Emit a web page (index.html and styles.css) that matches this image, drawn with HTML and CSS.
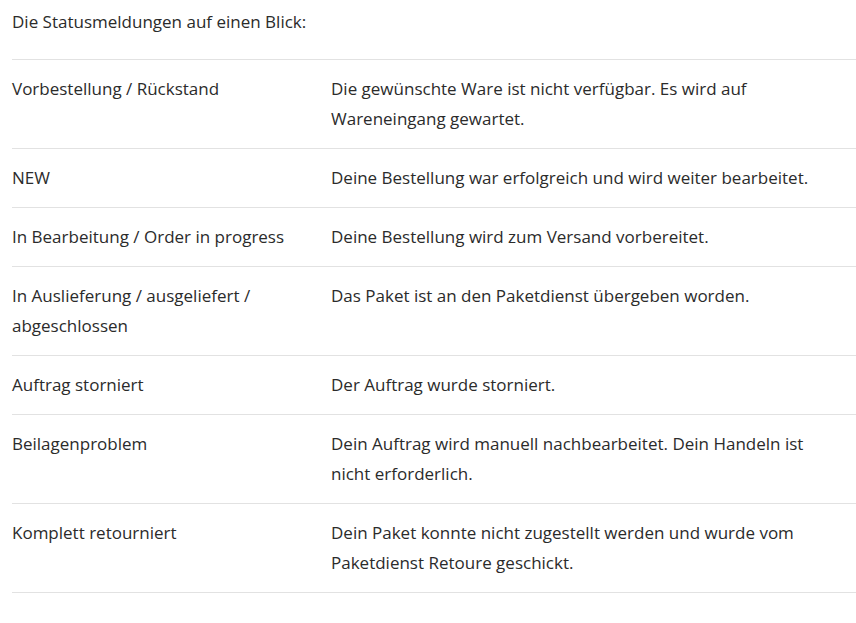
FILE: index.html
```html
<!DOCTYPE html>
<html lang="de">
<head>
<meta charset="utf-8">
<link rel="stylesheet" href="styles.css">
</head>
<body>
<div class="content">
<p class="intro">Die Statusmeldungen auf einen Blick:</p>
<table class="status">
<tr><td class="name">Vorbestellung / Rückstand</td><td class="desc">Die gewünschte Ware ist nicht verfügbar. Es wird auf Wareneingang gewartet.</td></tr>
<tr><td class="name">NEW</td><td class="desc">Deine Bestellung war erfolgreich und wird weiter bearbeitet.</td></tr>
<tr><td class="name">In Bearbeitung / Order in progress</td><td class="desc">Deine Bestellung wird zum Versand vorbereitet.</td></tr>
<tr><td class="name">In Auslieferung / ausgeliefert / abgeschlossen</td><td class="desc">Das Paket ist an den Paketdienst übergeben worden.</td></tr>
<tr><td class="name">Auftrag storniert</td><td class="desc">Der Auftrag wurde storniert.</td></tr>
<tr><td class="name">Beilagenproblem</td><td class="desc">Dein Auftrag wird manuell nachbearbeitet. Dein Handeln ist nicht erforderlich.</td></tr>
<tr><td class="name">Komplett retourniert</td><td class="desc">Dein Paket konnte nicht zugestellt werden und wurde vom Paketdienst Retoure geschickt.</td></tr>
</table>
</div>
</body>
</html>
```
FILE: styles.css
```css
html, body {
  margin: 0;
  padding: 0;
  background: #fff;
}
body {
  font-family: "Open Sans", Lato, sans-serif;
  font-size: 17px;
  line-height: 30px;
  color: #2b2b2b;
}
.content {
  padding: 7px 0 0 12px;
}
.intro {
  margin: 0 0 22px 0;
}
.status {
  width: 100%;
  border-collapse: collapse;
  table-layout: fixed;
}
.status tr {
  border-top: 1px solid #e2e2e2;
  border-bottom: 1px solid #e2e2e2;
}
.status td {
  padding: 14px 0;
  vertical-align: top;
}
.status .name {
  width: 299px;
  padding-right: 20px;
}
.status .desc {
  padding-right: 30px;
}
```
